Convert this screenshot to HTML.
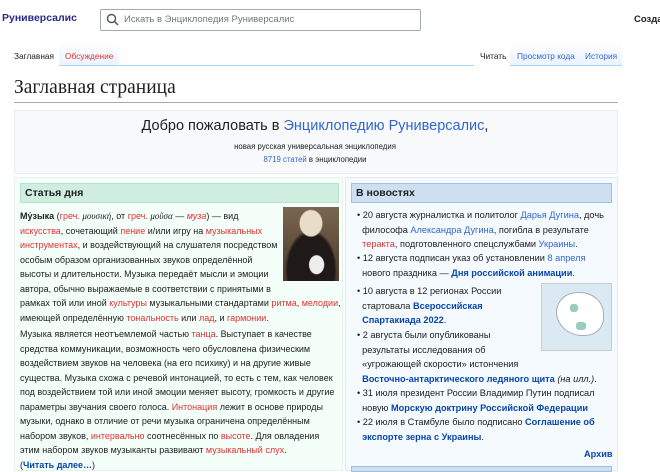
<!DOCTYPE html>
<html><head><meta charset="utf-8"><style>
*{margin:0;padding:0;box-sizing:border-box}
body{width:660px;height:471px;overflow:hidden;background:#fff;font-family:"Liberation Sans","Noto Sans CJK SC",sans-serif;color:#202122;position:relative}
.a{position:absolute}
a,.b{color:#3366cc;text-decoration:none}
.r{color:#d33}
.t{font-size:9.3px;line-height:14.5px;white-space:nowrap}
b.l{color:#0645ad}
</style></head><body>
<div class="a" style="left:2px;top:12px;font-size:10.5px;font-weight:bold;color:#2a2a8a">Руниверсалис</div>
<div class="a" style="left:100px;top:9px;width:321px;height:22px;border:1px solid #a2a9b1;border-radius:2px"></div>
<svg class="a" style="left:106px;top:13px" width="13" height="13" viewBox="0 0 13 13"><circle cx="5.5" cy="5.5" r="4" fill="none" stroke="#555" stroke-width="1.4"/><line x1="8.5" y1="8.5" x2="12" y2="12" stroke="#555" stroke-width="1.5"/></svg>
<div class="a" style="left:124px;top:14px;font-size:9.5px;color:#72777d">Искать в Энциклопедия Руниверсалис</div>
<div class="a" style="left:634px;top:14px;font-size:9.5px;font-weight:bold">Созда</div>

<div class="a" style="left:14px;top:51px;font-size:8.3px;color:#202122">Заглавная</div>
<div class="a" style="left:59px;top:42px;width:60px;height:24px;background:linear-gradient(#fff,#eaf3ff);border-bottom:1px solid #a7d7f9"></div>
<div class="a" style="left:65px;top:51px;font-size:8.3px;color:#d33">Обсуждение</div>
<div class="a" style="left:119px;top:65px;width:355px;height:1px;background:#a7d7f9"></div>
<div class="a" style="left:480px;top:51px;font-size:8.3px">Читать</div>
<div class="a" style="left:510px;top:42px;width:112px;height:24px;background:linear-gradient(#fff,#eaf3ff);border-bottom:1px solid #a7d7f9"></div>
<div class="a" style="left:517px;top:51px;font-size:8.3px;color:#3366cc">Просмотр кода</div>
<div class="a" style="left:585px;top:51px;font-size:8.3px;color:#3366cc">История</div>

<div class="a" style="left:14px;top:77px;font-family:'Liberation Serif',serif;font-size:19.5px">Заглавная страница</div>
<div class="a" style="left:14px;top:102px;width:604px;height:1px;background:#a2a9b1"></div>

<div class="a" style="left:14px;top:110px;width:604px;height:64px;background:#f8f9fa;border:1px solid #eaecf0"></div>
<div class="a" style="left:0;width:630px;top:118px;text-align:center;font-size:14.5px">Добро пожаловать в <a>Энциклопедию Руниверсалис</a>,</div>
<div class="a" style="left:0;width:630px;top:142px;text-align:center;font-size:7.8px">новая русская универсальная энциклопедия</div>
<div class="a" style="left:0;width:630px;top:155px;text-align:center;font-size:7.8px"><a>8719 статей</a> в энциклопедии</div>

<div class="a" style="left:14px;top:177px;width:329px;height:294px;background:#f5fffa;border:1px solid #e3f3ec"></div>
<div class="a" style="left:20px;top:183px;width:319px;height:20px;background:#d0eee0;border:1px solid #b9e0cc;font-size:10.5px;font-weight:bold;padding:3px 0 0 4px">Статья дня</div>
<div class="a" style="left:283px;top:207px;width:56px;height:74px;background:radial-gradient(ellipse 12px 14px at 50% 22%,#e9dccb 0 90%,transparent 100%),radial-gradient(ellipse 8px 10px at 60% 78%,#eee 0 90%,transparent 100%),radial-gradient(ellipse 26px 40px at 50% 85%,#1f1a18 0 90%,transparent 100%),linear-gradient(#7a6650,#4a3a2a)"></div>
<div class="a t" style="left:20px;top:209px;font-size:9px"><b>Му́зыка</b> (<span class="r">греч.</span> <i style="font-family:'Liberation Serif',serif">μουσική</i>, от <span class="r">греч.</span> <i style="font-family:'Liberation Serif',serif">μοῦσα</i> — <i class="r">муза</i>) — вид<br><span class="r">искусства</span>, сочетающий <span class="r">пение</span> и/или игру на <span class="r">музыкальных</span><br><span class="r">инструментах</span>, и воздействующий на слушателя посредством<br>особым образом организованных звуков определённой<br>высоты и длительности. Музыка передаёт мысли и эмоции<br>автора, обычно выражаемые в соответствии с принятыми в<br>рамках той или иной <span class="r">культуры</span> музыкальными стандартами <span class="r">ритма</span>, <span class="r">мелодии</span>,<br>имеющей определённую <span class="r">тональность</span> или <span class="r">лад</span>, и <span class="r">гармонии</span>.</div>
<div class="a t" style="left:20px;top:327px;font-size:9px">Музыка является неотъемлемой частью <span class="r">танца</span>. Выступает в качестве<br>средства коммуникации, возможность чего обусловлена физическим<br>воздействием звуков на человека (на его психику) и на другие живые<br>существа. Музыка схожа с речевой интонацией, то есть с тем, как человек<br>под воздействием той или иной эмоции меняет высоту, громкость и другие<br>параметры звучания своего голоса. <span class="r">Интонация</span> лежит в основе природы<br>музыки, однако в отличие от речи музыка ограничена определённым<br>набором звуков, <span class="r">интервально</span> соотнесённых по <span class="r">высоте</span>. Для овладения<br>этим набором звуков музыканты развивают <span class="r">музыкальный слух</span>.<br>(<b class="l">Читать далее…</b>)</div>

<div class="a" style="left:345px;top:177px;width:273px;height:294px;background:#f5faff;border:1px solid #e0eaf5"></div>
<div class="a" style="left:351px;top:183px;width:261px;height:20px;background:#cedff2;border:1px solid #a3bfe0;font-size:10.5px;font-weight:bold;padding:3px 0 0 4px">В новостях</div>
<div class="a" style="left:541px;top:283px;width:71px;height:68px;background:#dbe9f3;border:1px solid #ccc"><div style="position:absolute;left:14px;top:8px;width:48px;height:44px;border-radius:45% 50% 40% 55%;background:#fff;border:1px solid #aab"></div><div style="position:absolute;left:28px;top:20px;width:8px;height:8px;background:#9cb;border-radius:3px"></div><div style="position:absolute;left:34px;top:38px;width:10px;height:8px;background:#9cb;border-radius:3px"></div></div>
<div class="a t" style="left:357px;top:208px;font-size:9.2px">• 20 августа журналистка и политолог <a>Дарья Дугина</a>, дочь<br>&nbsp;&nbsp;философа <a>Александра Дугина</a>, погибла в результате<br>&nbsp;&nbsp;<span class="r">теракта</span>, подготовленного спецслужбами <a>Украины</a>.</div>
<div class="a t" style="left:357px;top:251px;font-size:9.2px">• 12 августа подписан указ об установлении <a>8 апреля</a><br>&nbsp;&nbsp;нового праздника — <b class="l">Дня российской анимации</b>.</div>
<div class="a t" style="left:357px;top:284px;font-size:9.2px">• 10 августа в 12 регионах России<br>&nbsp;&nbsp;стартовала <b class="l">Всероссийская</b><br>&nbsp;&nbsp;<b class="l">Спартакиада 2022</b>.</div>
<div class="a t" style="left:357px;top:328px;font-size:9.2px">• 2 августа были опубликованы<br>&nbsp;&nbsp;результаты исследования об<br>&nbsp;&nbsp;«угрожающей скорости» истончения<br>&nbsp;&nbsp;<b class="l">Восточно-антарктического ледяного щита</b> <i>(на илл.)</i>.</div>
<div class="a t" style="left:357px;top:386px;font-size:9.2px">• 31 июля президент России Владимир Путин подписал<br>&nbsp;&nbsp;новую <b class="l">Морскую доктрину Российской Федерации</b></div>
<div class="a t" style="left:357px;top:415px;font-size:9.2px">• 22 июля в Стамбуле было подписано <b class="l">Соглашение об</b><br>&nbsp;&nbsp;<b class="l">экспорте зерна с Украины</b>.</div>
<div class="a t" style="left:584px;top:447px;font-size:9.2px"><b class="l">Архив</b></div>
<div class="a" style="left:351px;top:466px;width:261px;height:6px;background:#cedff2;border:1px solid #a3bfe0"></div>
</body></html>
